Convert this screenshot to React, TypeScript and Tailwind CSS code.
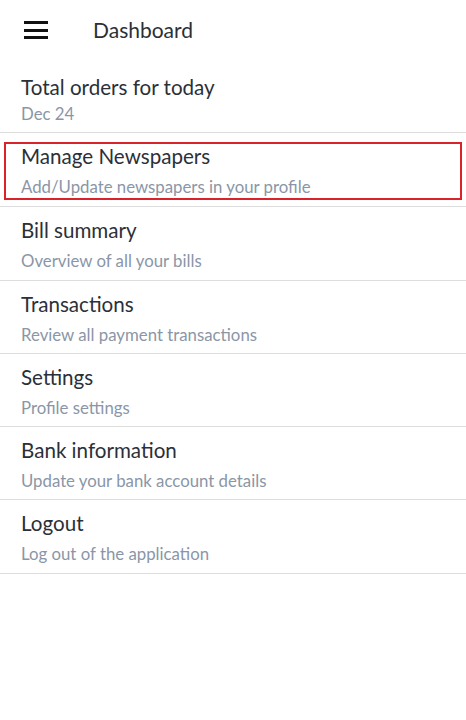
const items = [
  { title: "Manage Newspapers", sub: "Add/Update newspapers in your profile", active: true },
  { title: "Bill summary", sub: "Overview of all your bills" },
  { title: "Transactions", sub: "Review all payment transactions" },
  { title: "Settings", sub: "Profile settings" },
  { title: "Bank information", sub: "Update your bank account details" },
  { title: "Logout", sub: "Log out of the application" },
];

function MenuIcon() {
  return (
    <div className="flex flex-col gap-[4.5px] w-6">
      <span className="block h-[3px] bg-[#111]" />
      <span className="block h-[3px] bg-[#111]" />
      <span className="block h-[3px] bg-[#111]" />
    </div>
  );
}

export default function App() {
  return (
    <div className="w-[466px] h-[720px] bg-white font-['Lato','Noto_Sans',sans-serif] text-[#2b3038]">
      <header className="h-[60px] flex items-center pl-6">
        <MenuIcon />
        <h1 className="ml-[45px] text-[21px] leading-7">Dashboard</h1>
      </header>

      <div className="pt-[13px] pb-[7px] px-[21px] border-b border-[#dddddd]">
        <div className="text-[20.6px] leading-7">Total orders for today</div>
        <div className="mt-[2px] text-[16.8px] leading-[22px] text-[#8a96a7]">Dec 24</div>
      </div>

      {items.map((item) =>
        item.active ? (
          <div key={item.title} className="pt-[9px] pb-[6.3px] px-[4px] border-b border-[#dddddd]">
            <div className="border-2 border-[#d8232a] pl-[15px]">
              <div className="-mt-[2px] text-[20.6px] leading-7">{item.title}</div>
              <div className="mt-[6px] text-[16.8px] leading-[22px] text-[#8a96a7]">{item.sub}</div>
            </div>
          </div>
        ) : (
          <div key={item.title} className="pt-[9px] pb-[7.3px] px-[21px] border-b border-[#dddddd]">
            <div className="text-[20.6px] leading-7">{item.title}</div>
            <div className="mt-[6px] text-[16.8px] leading-[22px] text-[#8a96a7]">{item.sub}</div>
          </div>
        )
      )}
    </div>
  );
}
